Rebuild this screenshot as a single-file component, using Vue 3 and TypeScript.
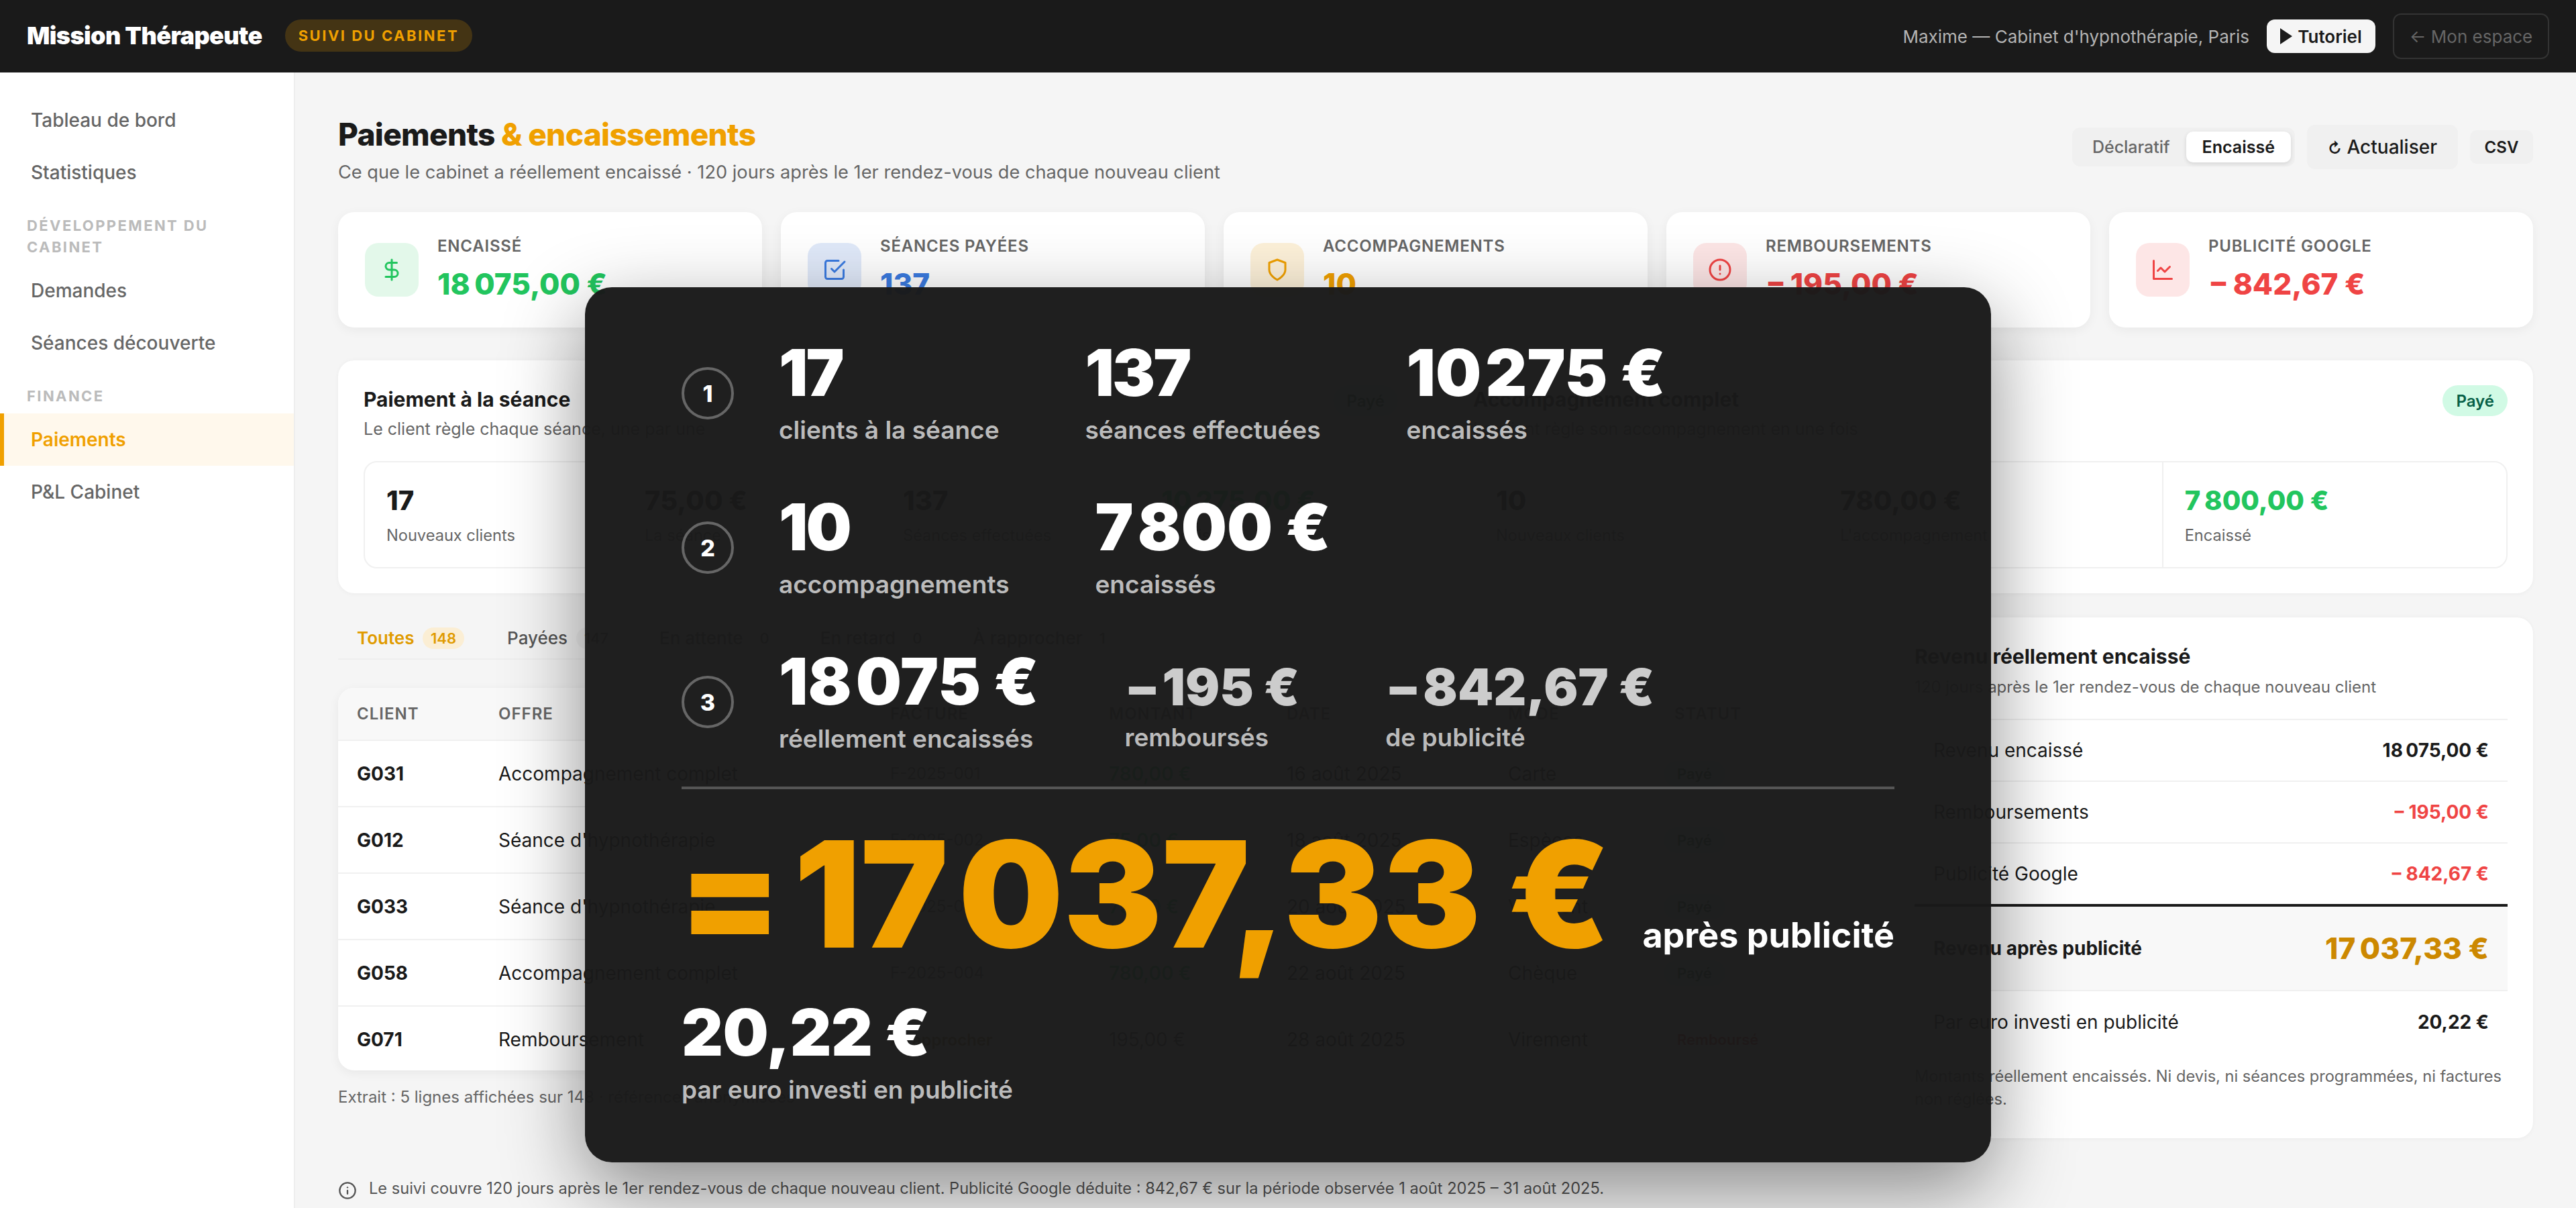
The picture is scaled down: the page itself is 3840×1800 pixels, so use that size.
<script setup lang="ts">
// Suivi du cabinet : page Paiements avec le récapitulatif par-dessus
const NN = '\u202f'
const NB = '\u00a0'
const eur = (s: string) => s.replace(/ (?=\d)/g, NN).replace(' €', NB + '€')

const kpis = [
  { label: 'Encaissé', value: eur('18 075,00 €'), tone: 'green', icon: 'dollar' },
  { label: 'Séances payées', value: '137', tone: 'blue', icon: 'check' },
  { label: 'Accompagnements', value: '10', tone: 'orange', icon: 'shield' },
  { label: 'Remboursements', value: '\u2212' + NN + eur('195,00 €'), tone: 'red', icon: 'alert' },
  { label: 'Publicité Google', value: '\u2212' + NN + eur('842,67 €'), tone: 'red', icon: 'chart' },
]

const offers = [
  {
    title: 'Paiement à la séance',
    sub: 'Le client règle chaque séance, une par une',
    stats: [
      { value: '17', label: 'Nouveaux clients' },
      { value: eur('75,00 €'), label: 'La séance' },
      { value: '137', label: 'Séances effectuées' },
      { value: eur('10 275,00 €'), label: 'Encaissé', good: true },
    ],
  },
  {
    title: 'Accompagnement complet',
    sub: 'Le client règle son accompagnement en une fois',
    stats: [
      { value: '10', label: 'Nouveaux clients' },
      { value: eur('780,00 €'), label: "L'accompagnement" },
      { value: eur('7 800,00 €'), label: 'Encaissé', good: true },
    ],
  },
]

const tabs = [
  { label: 'Toutes', count: 148, active: true },
  { label: 'Payées', count: 147 },
  { label: 'En attente', count: 0 },
  { label: 'En retard', count: 0 },
  { label: 'À rapprocher', count: 1 },
]

const rows = [
  { client: 'G031', offer: 'Accompagnement complet', invoice: 'F-2025-001', amount: '780,00 €', date: '16 août 2025', mode: 'Carte', status: 'Payé' },
  { client: 'G012', offer: "Séance d'hypnothérapie", invoice: 'F-2025-002', amount: '75,00 €', date: '18 août 2025', mode: 'Espèces', status: 'Payé' },
  { client: 'G033', offer: "Séance d'hypnothérapie", invoice: 'F-2025-003', amount: '75,00 €', date: '20 août 2025', mode: 'Virement', status: 'Payé' },
  { client: 'G058', offer: 'Accompagnement complet', invoice: 'F-2025-004', amount: '780,00 €', date: '22 août 2025', mode: 'Chèque', status: 'Payé' },
  { client: 'G071', offer: 'Remboursement', invoice: 'À rapprocher', amount: '195,00 €', date: '28 août 2025', mode: 'Virement', status: 'Remboursé', refund: true },
]

const revenue = [
  { label: 'Revenu encaissé', value: eur('18 075,00 €') },
  { label: 'Remboursements', value: '\u2212' + NN + eur('195,00 €'), minus: true },
  { label: 'Publicité Google', value: '\u2212' + NN + eur('842,67 €'), minus: true },
]
</script>

<template>
  <div class="page">
    <header class="topbar">
      <div class="brand">
        <span class="brand-name">Mission Thérapeute</span>
        <span class="brand-tag">SUIVI DU CABINET</span>
      </div>
      <div class="top-right">
        <span class="who">Maxime — Cabinet d'hypnothérapie, Paris</span>
        <button class="btn-tuto"><span class="play"></span>Tutoriel</button>
        <button class="btn-back">← Mon espace</button>
      </div>
    </header>

    <div class="shell">
      <aside class="sidebar">
        <a class="nav">Tableau de bord</a>
        <a class="nav">Statistiques</a>
        <div class="nav-title">DÉVELOPPEMENT DU CABINET</div>
        <a class="nav">Demandes</a>
        <a class="nav">Séances découverte</a>
        <div class="nav-title">FINANCE</div>
        <a class="nav active">Paiements</a>
        <a class="nav">P&amp;L Cabinet</a>
      </aside>

      <main class="main">
        <div class="head">
          <div>
            <h1>Paiements <span>&amp; encaissements</span></h1>
            <p>Ce que le cabinet a réellement encaissé · 120 jours après le 1er rendez-vous de chaque nouveau client</p>
          </div>
          <div class="actions">
            <div class="toggle">
              <span>Déclaratif</span>
              <span class="on">Encaissé</span>
            </div>
            <button class="btn-refresh"><small>↻</small> Actualiser</button>
            <button class="btn-csv">CSV</button>
          </div>
        </div>

        <section class="kpis">
          <div v-for="k in kpis" :key="k.label" class="kpi">
            <div class="kpi-icon" :class="k.tone">
              <svg viewBox="0 0 24 24" fill="none" stroke="currentColor" stroke-width="2" stroke-linecap="round" stroke-linejoin="round">
                <template v-if="k.icon === 'dollar'">
                  <path d="M12 2v20" />
                  <path d="M17 5H9.5a3.5 3.5 0 0 0 0 7h5a3.5 3.5 0 0 1 0 7H6" />
                </template>
                <template v-else-if="k.icon === 'check'">
                  <path d="m9 11 3 3L22 4" />
                  <path d="M21 12v7a2 2 0 0 1-2 2H5a2 2 0 0 1-2-2V5a2 2 0 0 1 2-2h11" />
                </template>
                <path v-else-if="k.icon === 'shield'" d="M12 22s8-4 8-10V5l-8-3-8 3v7c0 6 8 10 8 10z" />
                <template v-else-if="k.icon === 'alert'">
                  <circle cx="12" cy="12" r="10" />
                  <path d="M12 8v4" />
                  <path d="M12 16h.01" />
                </template>
                <template v-else>
                  <path d="M3 3v18h18" />
                  <path d="m19 9-5 5-4-4-3 3" />
                </template>
              </svg>
            </div>
            <div>
              <div class="kpi-label">{{ k.label }}</div>
              <div class="kpi-value" :class="'txt-' + k.tone">{{ k.value }}</div>
            </div>
          </div>
        </section>

        <section class="offers">
          <div v-for="o in offers" :key="o.title" class="offer">
            <div class="offer-head">
              <div>
                <h3>{{ o.title }}</h3>
                <p>{{ o.sub }}</p>
              </div>
              <span class="badge-paid">Payé</span>
            </div>
            <div class="offer-stats">
              <div v-for="s in o.stats" :key="s.label" class="offer-stat">
                <strong :class="{ 'txt-green': s.good }">{{ s.value }}</strong>
                <span>{{ s.label }}</span>
              </div>
            </div>
          </div>
        </section>

        <section class="lower">
          <div class="lower-left">
            <nav class="tabs">
              <span v-for="t in tabs" :key="t.label" class="tab" :class="{ active: t.active }">
                {{ t.label }} <em>{{ t.count }}</em>
              </span>
            </nav>
            <div class="table-card">
              <table>
                <thead>
                  <tr>
                    <th class="c1">CLIENT</th>
                    <th class="c2">OFFRE</th>
                    <th class="c3">FACTURE</th>
                    <th class="c4">MONTANT</th>
                    <th class="c5">DATE</th>
                    <th class="c6">MODE</th>
                    <th class="c7">STATUT</th>
                  </tr>
                </thead>
                <tbody>
                  <tr v-for="r in rows" :key="r.client">
                    <td class="client">{{ r.client }}</td>
                    <td>{{ r.offer }}</td>
                    <td><span class="invoice" :class="{ todo: r.refund }">{{ r.invoice }}</span></td>
                    <td class="amount" :class="{ neutral: r.refund }">{{ r.amount }}</td>
                    <td>{{ r.date }}</td>
                    <td>{{ r.mode }}</td>
                    <td><span class="status" :class="{ refund: r.refund }">{{ r.status }}</span></td>
                  </tr>
                </tbody>
              </table>
            </div>
            <p class="extract">Extrait : 5 lignes affichées sur 148 · références anonymisées</p>
          </div>

          <aside class="revenue">
            <h3>Revenu réellement encaissé</h3>
            <p class="rev-sub">120 jours après le 1er rendez-vous de chaque nouveau client</p>
            <div v-for="l in revenue" :key="l.label" class="rev-row">
              <span>{{ l.label }}</span>
              <b :class="{ 'txt-red': l.minus }">{{ l.value }}</b>
            </div>
            <div class="rev-row total">
              <span>Revenu après publicité</span>
              <b>17&#8239;037,33&nbsp;€</b>
            </div>
            <div class="rev-row last">
              <span>Par euro investi en publicité</span>
              <b>20,22&nbsp;€</b>
            </div>
            <p class="rev-note">Montants réellement encaissés. Ni devis, ni séances programmées, ni factures non réglées.</p>
          </aside>
        </section>

        <p class="foot">
          <svg viewBox="0 0 24 24" fill="none" stroke="currentColor" stroke-width="2" stroke-linecap="round">
            <circle cx="12" cy="12" r="10" />
            <path d="M12 16v-4" />
            <path d="M12 8h.01" />
          </svg>
          Le suivi couvre 120 jours après le 1er rendez-vous de chaque nouveau client. Publicité Google déduite : 842,67&nbsp;€ sur la période observée 1 août 2025 – 31 août 2025.
        </p>
      </main>
    </div>

    <!-- récapitulatif par-dessus la page -->
    <div class="recap">
      <div class="recap-row">
        <span class="step">1</span>
        <div class="col"><b>17</b><span>clients à la séance</span></div>
        <div class="col"><b>137</b><span>séances effectuées</span></div>
        <div class="col"><b>10<i class="nn">&#8239;</i>275&nbsp;€</b><span>encaissés</span></div>
      </div>
      <div class="recap-row">
        <span class="step">2</span>
        <div class="col"><b>10</b><span>accompagnements</span></div>
        <div class="col"><b>7<i class="nn">&#8239;</i>800&nbsp;€</b><span>encaissés</span></div>
      </div>
      <div class="recap-row last">
        <span class="step">3</span>
        <div class="cols-end">
          <div class="col"><b>18<i class="nn">&#8239;</i>075&nbsp;€</b><span>réellement encaissés</span></div>
          <div class="col small"><b>−<i class="nn">&#8239;</i>195&nbsp;€</b><span>remboursés</span></div>
          <div class="col small"><b>−<i class="nn">&#8239;</i>842,67&nbsp;€</b><span>de publicité</span></div>
        </div>
      </div>
      <div class="recap-sep"></div>
      <div class="recap-total">
        <span class="big">=<i class="eq">&nbsp;</i>17<i class="nn">&#8239;</i>037,33<i class="eur">&nbsp;</i>€</span>
        <span class="after">après publicité</span>
      </div>
      <div class="col per-euro"><b>20,22&nbsp;€</b><span>par euro investi en publicité</span></div>
    </div>
  </div>
</template>

<style>
html, body {
  margin: 0;
  background: #f5f5f5;
}
</style>

<style scoped>
* {
  box-sizing: border-box;
}

.page {
  position: relative;
  width: 3840px;
  height: 1800px;
  overflow: hidden;
  background: #f5f5f5;
  color: #1a1a1a;
  font-family: Inter, "Liberation Sans", sans-serif;
}

button {
  font-family: inherit;
  border: none;
  cursor: pointer;
}

/* barre du haut */
.topbar {
  height: 108px;
  background: #1a1a1a;
  display: flex;
  align-items: center;
  justify-content: space-between;
  padding: 0 40px;
}

.brand {
  display: flex;
  align-items: center;
  gap: 34px;
  margin-top: -2px;
}

.brand-name {
  font-size: 36px;
  font-weight: 900;
  color: #fff;
  letter-spacing: -0.6px;
}

.brand-tag {
  height: 48px;
  display: flex;
  align-items: center;
  padding: 0 20px;
  border-radius: 24px;
  background: rgba(240, 160, 0, 0.2);
  color: #f0a000;
  font-size: 22px;
  font-weight: 700;
  letter-spacing: 2.5px;
}

.top-right {
  display: flex;
  align-items: center;
  gap: 26px;
}

.who {
  color: #b4b4b4;
  font-size: 26px;
}

.btn-tuto {
  height: 50px;
  width: 162px;
  display: flex;
  align-items: center;
  justify-content: center;
  gap: 8px;
  background: #f5f5f5;
  color: #1a1a1a;
  font-size: 26px;
  font-weight: 600;
  border-radius: 12px;
}

.play {
  width: 0;
  height: 0;
  border-left: 18px solid #1a1a1a;
  border-top: 12px solid transparent;
  border-bottom: 12px solid transparent;
}

.btn-back {
  height: 68px;
  width: 233px;
  background: transparent;
  border: 2px solid #333;
  border-radius: 12px;
  color: #666;
  font-size: 26px;
}

/* colonne de gauche */
.shell {
  display: flex;
  height: 1692px;
}

.sidebar {
  width: 440px;
  flex: none;
  background: #fff;
  border-right: 2px solid #eee;
  padding-top: 32px;
}

.nav {
  display: flex;
  align-items: center;
  height: 78px;
  padding-left: 46px;
  color: #666;
  font-size: 28px;
  font-weight: 500;
}

.nav.active {
  background: #fff8ec;
  border-left: 6px solid #f0a000;
  padding-left: 40px;
  color: #f0a000;
  font-weight: 600;
}

.nav-title {
  padding: 24px 40px 10px;
  color: #bbb;
  font-size: 22px;
  line-height: 32px;
  font-weight: 700;
  letter-spacing: 2.4px;
}

.main {
  flex: 1;
  min-width: 0;
  padding: 64px 64px 0;
}

/* entête de page */
.head {
  display: flex;
  justify-content: space-between;
  align-items: center;
  height: 104px;
}

h1 {
  margin: 0;
  font-size: 46px;
  line-height: 52px;
  font-weight: 800;
  letter-spacing: -0.7px;
}

h1 span {
  color: #f0a000;
}

.head p {
  margin: 13px 0 0;
  color: #666;
  font-size: 27.2px;
  line-height: 36px;
}

.actions {
  display: flex;
  align-items: center;
  gap: 18px;
  margin-top: -10px;
}

.toggle {
  display: flex;
  height: 58px;
  padding: 6px;
  background: #f0f0f0;
  border-radius: 12px;
  font-size: 25px;
  font-weight: 500;
  color: #666;
}

.toggle span {
  display: flex;
  align-items: center;
  padding: 0 24px;
}

.toggle .on {
  background: #fff;
  color: #1a1a1a;
  font-weight: 600;
  border-radius: 10px;
  box-shadow: 0 2px 6px rgba(0, 0, 0, 0.12);
}

.btn-refresh {
  height: 66px;
  width: 225px;
  background: #f0f0f0;
  border-radius: 12px;
  font-size: 28px;
  font-weight: 500;
  color: #1a1a1a;
}

.btn-refresh small {
  font-size: 22px;
  font-weight: 700;
}

.btn-csv {
  height: 50px;
  width: 94px;
  background: #f0f0f0;
  border-radius: 10px;
  font-size: 24px;
  font-weight: 600;
  color: #1a1a1a;
}

/* indicateurs */
.kpis {
  display: grid;
  grid-template-columns: repeat(5, 1fr);
  gap: 28px;
  margin-top: 40px;
}

.kpi {
  height: 172px;
  background: #fff;
  border-radius: 24px;
  box-shadow: 0 4px 16px rgba(0, 0, 0, 0.05);
  display: flex;
  align-items: center;
  gap: 28px;
  padding: 0 40px;
}

.kpi-icon {
  width: 80px;
  height: 80px;
  flex: none;
  border-radius: 20px;
  display: flex;
  align-items: center;
  justify-content: center;
}

.kpi-icon svg {
  width: 36px;
  height: 36px;
}

.kpi-icon.green { background: #e3f8ea; color: #22c55e; }
.kpi-icon.blue { background: #e0e9f9; color: #3b7be0; }
.kpi-icon.orange { background: #fdf1d9; color: #f0a000; }
.kpi-icon.red { background: #fde6e6; color: #ef4444; }

.txt-green { color: #22c55e; }
.txt-blue { color: #3b7be0; }
.txt-orange { color: #f0a000; }
.txt-red { color: #ef4444; }

.kpi-label {
  color: #666;
  font-size: 24px;
  font-weight: 600;
  letter-spacing: 0.8px;
  text-transform: uppercase;
  line-height: 30px;
}

.kpi-value {
  margin-top: 12px;
  font-size: 44px;
  line-height: 58px;
  font-weight: 800;
}

/* les deux offres */
.offers {
  margin-top: 49px;
  height: 347px;
  background: #fff;
  border-radius: 24px;
  box-shadow: 0 -2px 6px rgba(0, 0, 0, 0.02), 0 2px 6px rgba(0, 0, 0, 0.03);
  padding: 38px;
  display: grid;
  grid-template-columns: 1fr 1fr;
  gap: 112px;
}

.offer-head {
  display: flex;
  justify-content: space-between;
  align-items: flex-start;
  height: 112px;
}

h3 {
  margin: 0;
  font-size: 30px;
  line-height: 40px;
  font-weight: 700;
}

.offer-head p {
  margin: 6px 0 0;
  color: #666;
  font-size: 25px;
  line-height: 36px;
}

.badge-paid {
  height: 46px;
  padding: 0 20px;
  display: flex;
  align-items: center;
  border-radius: 23px;
  background: #d1fae5;
  color: #065f46;
  font-size: 24px;
  font-weight: 600;
  margin-top: -1px;
}

.offer-stats {
  display: flex;
  height: 160px;
  border: 2px solid #f0f0f0;
  border-radius: 20px;
}

.offer-stat {
  flex: 1;
  display: flex;
  flex-direction: column;
  justify-content: center;
  padding: 0 32px;
  border-left: 2px solid #f0f0f0;
}

.offer-stat:first-child {
  border-left: none;
}

.offer-stat strong {
  font-size: 40px;
  line-height: 52px;
  font-weight: 800;
}

.offer-stat span {
  margin-top: 10px;
  color: #666;
  font-size: 23.6px;
  line-height: 32px;
}

/* bas de page */
.lower {
  display: grid;
  grid-template-columns: 2284px 960px;
  justify-content: space-between;
  margin-top: 36px;
}

.tabs {
  height: 63px;
  padding-left: 28px;
  display: flex;
  align-items: flex-start;
  gap: 64px;
  border-bottom: 2px solid #eee;
}

.tab {
  margin-top: 13px;
  color: #555;
  font-size: 26px;
  line-height: 36px;
  font-weight: 500;
}

.tab em {
  display: inline-block;
  margin-left: 6px;
  padding: 0 12px;
  font-style: normal;
  font-size: 22px;
  line-height: 32px;
  border-radius: 16px;
  background: #eee;
  vertical-align: 1px;
}

.tab.active {
  color: #e09b00;
  font-weight: 600;
}

.tab.active em {
  background: #fbeed4;
}

.table-card {
  margin-top: 42px;
  height: 570px;
  background: #fff;
  border-radius: 24px;
  overflow: hidden;
  box-shadow: 0 4px 16px rgba(0, 0, 0, 0.06);
}

table {
  width: 100%;
  border-collapse: collapse;
  table-layout: fixed;
  font-size: 28px;
}

th {
  height: 78px;
  padding: 0 0 0 28px;
  background: #f8f8f8;
  border-bottom: 2px solid #f0f0f0;
  text-align: left;
  color: #666;
  font-size: 24px;
  font-weight: 600;
  letter-spacing: 1px;
}

.c1 { width: 211px; }
.c2 { width: 584px; }
.c3 { width: 326px; }
.c4 { width: 265px; }
.c5 { width: 330px; }
.c6 { width: 248px; }

td {
  height: 99px;
  padding: 0 0 0 28px;
  border-bottom: 2px solid #f0f0f0;
  white-space: nowrap;
}

tbody tr:last-child td {
  border-bottom: none;
}

.client {
  font-weight: 700;
}

.invoice {
  display: inline-block;
  padding: 6px 16px;
  margin-left: -16px;
  border-radius: 8px;
  background: #f4f8f4;
  color: #555;
  font-size: 24px;
}

.invoice.todo {
  background: #fbf3e2;
  color: #8a6500;
  font-weight: 600;
}

.amount {
  color: #22c55e;
  font-weight: 600;
}

.amount.neutral {
  color: #444;
  font-weight: 400;
}

.status {
  display: inline-block;
  padding: 6px 20px;
  margin-left: -16px;
  border-radius: 20px;
  background: #d1fae5;
  color: #065f46;
  font-size: 22px;
  font-weight: 600;
}

.status.refund {
  background: #fde6e6;
  color: #b91c1c;
}

.extract {
  margin: 24px 0 0;
  color: #666;
  font-size: 24px;
  line-height: 32px;
}

.revenue {
  height: 776px;
  background: #fff;
  border-radius: 24px;
  box-shadow: 0 -2px 6px rgba(0, 0, 0, 0.02), 0 2px 6px rgba(0, 0, 0, 0.03);
  padding: 38px 38px 0;
}

.rev-sub {
  margin: 8px 0 29px;
  color: #666;
  font-size: 24px;
  line-height: 36px;
}

.rev-row {
  height: 92px;
  display: flex;
  align-items: center;
  justify-content: space-between;
  padding: 0 28px;
  border-top: 2px solid #f0f0f0;
  font-size: 28px;
}

.rev-row b {
  font-weight: 700;
}

.rev-row.total {
  height: 130px;
  border-top: 4px solid #1a1a1a;
  border-bottom: 2px solid #f0f0f0;
  background: #f8f8f8;
}

.rev-row.total span {
  font-weight: 700;
}

.rev-row.total b {
  font-size: 44px;
  font-weight: 800;
  color: #cc8800;
}

.rev-row.last {
  border-top: none;
}

.rev-note {
  margin: 18px 0 0;
  color: #666;
  font-size: 23.6px;
  line-height: 34px;
}

.foot {
  display: flex;
  align-items: center;
  gap: 18px;
  margin: 58px 0 0;
  color: #555;
  font-size: 23.6px;
  line-height: 32px;
}

.foot svg {
  width: 28px;
  height: 28px;
  flex: none;
  margin-top: 6px;
}

/* récapitulatif */
.recap {
  position: absolute;
  left: 872px;
  top: 428px;
  width: 2096px;
  height: 1304px;
  padding: 79px 144px 0;
  border-radius: 40px;
  background: rgba(26, 26, 26, 0.975);
  box-shadow: 0 40px 120px rgba(0, 0, 0, 0.45);
  color: #fff;
}

.recap-row {
  display: flex;
  align-items: center;
  gap: 128px;
  margin-bottom: 72px;
  position: relative;
  padding-left: 145px;
}

.recap-row.last {
  margin-bottom: 47px;
}

.step {
  position: absolute;
  left: 0;
  top: 50%;
  margin-top: -39px;
  width: 78px;
  height: 78px;
  border: 4px solid #666;
  border-radius: 50%;
  display: flex;
  align-items: center;
  justify-content: center;
  font-size: 34px;
  font-weight: 800;
}

.col {
  display: flex;
  flex-direction: column;
  gap: 14px;
}

.col b {
  font-size: 96px;
  line-height: 96px;
  font-weight: 900;
  letter-spacing: -3px;
  white-space: nowrap;
}

/* espace fine resserrée dans les grands montants */
.nn,
.eq,
.eur {
  font-style: normal;
}

.nn {
  margin-right: -7px;
}

.col span {
  color: #bbb;
  font-size: 37px;
  line-height: 48px;
  font-weight: 600;
}

.cols-end {
  display: flex;
  align-items: flex-end;
  gap: 128px;
}

.col.small {
  padding-bottom: 2px;
}

.col.small b {
  font-size: 76px;
  line-height: 76px;
  color: #ccc;
  letter-spacing: -3px;
}

.col.small .nn {
  margin-right: -7px;
}

.recap-sep {
  height: 4px;
  background: #555;
  margin-bottom: 46px;
}

.recap-total {
  display: flex;
  justify-content: space-between;
  align-items: baseline;
  height: 220px;
  white-space: nowrap;
}

.big {
  margin-left: -4px;
  font-size: 220px;
  line-height: 220px;
  font-weight: 900;
  letter-spacing: -8.5px;
  color: #f0a000;
}

.big .eq {
  margin-right: -25px;
}

.big .nn {
  margin-right: -15px;
}

.big .eur {
  margin-right: -5px;
}

.after {
  font-size: 52px;
  font-weight: 700;
}

.per-euro {
  margin-top: 48px;
}

.per-euro b {
  letter-spacing: -0.5px;
}
</style>
